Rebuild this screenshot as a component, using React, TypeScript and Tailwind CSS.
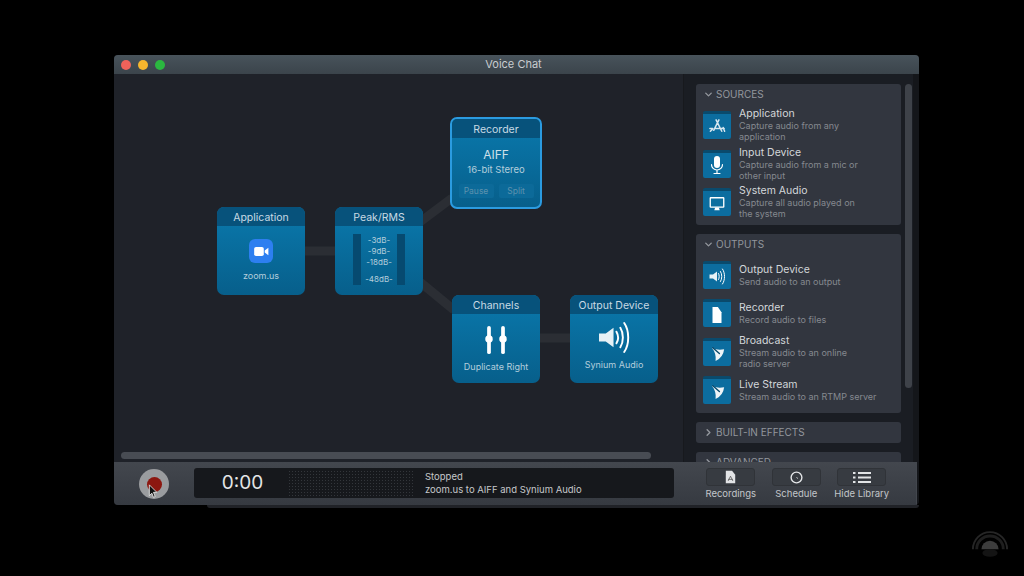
import React from 'react';
import { ChevronDown, ChevronRight } from 'lucide-react';

const font = { fontFamily: 'Inter, "Liberation Sans", sans-serif' };

function SpeakerIcon({ className }: { className: string }) {
	return (
		<svg viewBox="0 0 34 34" className={className} fill="none">
			<path d="M1 13h7l8-6v20l-8-6H1z" fill="#fff" opacity="0.9" />
			<path d="M19 11c2 3.500 2 8.500 0 12M23 7c3.500 5.500 3.500 14.500 0 20M27 2c5.500 8 5.500 22 0 30" stroke="#fff" strokeWidth="2" strokeLinecap="round" />
		</svg>
	);
}

function DishIcon() {
	return (
		<svg viewBox="0 0 20 20" className="w-[19px] h-[19px]" fill="none">
			<path d="M4 4Q10 7 17 5.500Q16 14 8 18Q9 10 4 4z" fill="#eef4f7" />
			<path d="M5 4l7 6" stroke="#0a4a6c" strokeWidth="1.500" strokeLinecap="round" />
		</svg>
	);
}

function AppStoreIcon() {
	return (
		<svg viewBox="0 0 20 20" className="w-[19px] h-[19px]" fill="none" stroke="#d6e6ef" strokeWidth="1.600" strokeLinecap="round">
			<path d="M11.500 3L6 14M8.500 3L14.500 15M2 12h3M8 12h9M2.500 15l2-2M16 11l1.500 4" />
		</svg>
	);
}

function MicIcon() {
	return (
		<svg viewBox="0 0 20 20" className="w-[20px] h-[20px]" fill="none">
			<rect x="7" y="1" width="6" height="12" rx="3" fill="#fff" />
			<path d="M4.500 9.500a5.500 5.500 0 0 0 11 0M10 15v3M7 18.500h6" stroke="#fff" strokeWidth="1.200" strokeLinecap="round" />
		</svg>
	);
}

function MonitorIcon() {
	return (
		<svg viewBox="0 0 20 20" className="w-[18px] h-[18px]" fill="none">
			<rect x="2.500" y="3" width="15" height="10.500" rx="0.500" stroke="#fff" strokeWidth="1.500" fill="#0d6f9f" />
			<path d="M8 14h4l1 3H7z" fill="#fff" />
		</svg>
	);
}

function FileIcon() {
	return (
		<svg viewBox="0 0 20 20" className="w-[18px] h-[18px]">
			<path d="M5 1h6l4 6v12H5z" fill="#fff" />
		</svg>
	);
}

function Node({ title, className, children }: { title: string; className: string; children: React.ReactNode }) {
	return (
		<div className={`absolute rounded-[7px] overflow-hidden flex flex-col bg-gradient-to-b from-[#0a79ad] to-[#075f8b] ${className}`}>
			<div className="h-[19px] shrink-0 bg-[#07527b] text-[#c8dae4] text-[10.500px] leading-[19px] pt-[0.500px] text-center">{title}</div>
			<div className="flex-1 flex flex-col items-center text-[#b4cedc]">{children}</div>
		</div>
	);
}

function LibraryItem({ icon, title, lines, className = '' }: { icon: React.ReactNode; title: string; lines: string[]; className?: string }) {
	return (
		<div className={`flex items-center ${className}`}>
			<div className="w-[28px] h-[28px] shrink-0 rounded-[2px] bg-[#0c6d9f] border-t-[3px] border-[#0a4a6c] flex items-center justify-center">{icon}</div>
			<div className="ml-[8px]">
				<div className="text-[10.500px] leading-[12px] text-[#d3d6da]">{title}</div>
				{lines.map((line) => (
					<div key={line} className="text-[9px] leading-[11px] text-[#85898f] whitespace-nowrap">
						{line}
					</div>
				))}
			</div>
		</div>
	);
}

function Panel({ title, open, className, children }: { title: string; open: boolean; className: string; children?: React.ReactNode }) {
	return (
		<div className={`shrink-0 rounded-[3px] bg-[#32363f] ${className}`}>
			<div className="h-[21px] flex items-center pl-[7px] gap-[2px] text-[#93979d] text-[10px]">
				{open ? <ChevronDown className="w-[11px] h-[11px]" strokeWidth={3} /> : <ChevronRight className="w-[11px] h-[11px]" strokeWidth={3} />}
				{title}
			</div>
			{children}
		</div>
	);
}

function ToolButton({ label, children }: { label: string; children: React.ReactNode }) {
	return (
		<div className="w-[65.500px] flex flex-col items-center">
			<div className="w-[49px] h-[18px] rounded-[3px] bg-[#373b41] border border-[#303338] flex items-center justify-center">{children}</div>
			<div className="mt-[1px] text-[9.500px] leading-[14px] text-[#c3c6ca] whitespace-nowrap">{label}</div>
		</div>
	);
}

export default function App() {
	return (
		<div className="relative w-[1024px] h-[576px] bg-black overflow-hidden pt-[55px] pl-[114px]" style={font}>
			<div className="w-[805px] h-[450px] flex flex-col rounded-[4px] overflow-hidden bg-[#14161a]">
				{/* Title bar */}
				<div className="relative h-[19px] shrink-0 bg-gradient-to-b from-[#48535b] to-[#3b444b] flex items-center pl-[7px] gap-[7px]">
					<div className="w-[10px] h-[10px] rounded-full bg-[#f0625a]" />
					<div className="w-[10px] h-[10px] rounded-full bg-[#f5b62e]" />
					<div className="w-[10px] h-[10px] rounded-full bg-[#2bb840]" />
					<div className="absolute inset-0 pr-[6px] text-center text-[11px] leading-[19px] text-[#c9ccd0]">Voice Chat</div>
				</div>

				<div className="flex h-[388px] shrink-0">
					{/* Canvas */}
					<div className="relative w-[569px] bg-[#1f2229]">
						<svg className="absolute inset-0 w-full h-full" fill="none" stroke="#2b2e34" strokeWidth="9">
							<path d="M191 177h30" />
							<path d="M306 148l32-24" />
							<path d="M306 208l34 28" />
							<path d="M426 264h30" />
						</svg>

						<Node title="Application" className="left-[103px] top-[133px] w-[88px] h-[88px]">
							<div className="mt-[13px] w-[24px] h-[24px] rounded-[6px] bg-[#2d7ff0] flex items-center justify-center">
								<svg viewBox="0 0 16 12" className="w-[15px] h-[11px]">
									<rect x="0" y="1" width="10.500" height="10" rx="2" fill="#fff" />
									<path d="M11.500 5l4-3v8l-4-3z" fill="#fff" />
								</svg>
							</div>
							<div className="mt-[7px] text-[9px] leading-[12px]">zoom.us</div>
						</Node>

						<Node title="Peak/RMS" className="left-[221px] top-[133px] w-[88px] h-[88px]">
							<div className="w-full flex justify-between px-[18px] pt-[8px]">
								<div className="w-[8px] h-[51px] bg-[#064a70]" />
								<div className="flex flex-col items-center text-[8px] leading-[11px] pt-[1px]">
									<span>-3dB-</span>
									<span>-9dB-</span>
									<span>-18dB-</span>
									<span className="mt-[6px]">-48dB-</span>
								</div>
								<div className="w-[8px] h-[51px] bg-[#064a70]" />
							</div>
						</Node>

						<Node title="Recorder" className="left-[336px] top-[43px] w-[92px] h-[92px] border-2 border-[#2b9be0]">
							<div className="mt-[9px] text-[12px] leading-[16px] text-[#cfe0e9]">AIFF</div>
							<div className="text-[9.500px] leading-[14px]">16-bit Stereo</div>
							<div className="mt-[7px] flex gap-[5px]">
								<div className="w-[35px] h-[14px] rounded-[2px] bg-[#0c6a99] text-[8.500px] leading-[14px] text-center text-[#5d92ae]">Pause</div>
								<div className="w-[35px] h-[14px] rounded-[2px] bg-[#0c6a99] text-[8.500px] leading-[14px] text-center text-[#5d92ae]">Split</div>
							</div>
						</Node>

						<Node title="Channels" className="left-[338px] top-[221px] w-[88px] h-[88px]">
							<svg viewBox="0 0 30 32" className="mt-[11px] w-[28px] h-[30px]">
								<rect x="5.500" y="1" width="4" height="30" rx="2" fill="#fff" />
								<rect x="20.500" y="1" width="4" height="30" rx="2" fill="#fff" />
								<circle cx="7.500" cy="15" r="4" fill="#fff" />
								<circle cx="22.500" cy="15" r="4" fill="#fff" />
							</svg>
							<div className="mt-[6px] text-[9px] leading-[12px]">Duplicate Right</div>
						</Node>

						<Node title="Output Device" className="left-[456px] top-[221px] w-[88px] h-[88px]">
							<SpeakerIcon className="mt-[7px] ml-[1px] w-[33px] h-[33px]" />
							<div className="mt-[5px] text-[9px] leading-[12px]">Synium Audio</div>
						</Node>

						{/* Horizontal scrollbar */}
						<div className="absolute left-[7px] top-[378px] w-[530px] h-[7px] rounded-full bg-[#484c53]" />
					</div>

					{/* Library */}
					<div className="relative w-[230px] bg-[#1a1d23] border-l border-[#17191d] pl-[12px] pt-[10px] flex flex-col gap-[9px] overflow-hidden">
						<Panel title="SOURCES" open className="w-[205px] h-[141px]">
							<div className="px-[7px] pt-[3px] flex flex-col gap-[4.500px]">
								<LibraryItem icon={<AppStoreIcon />} title="Application" lines={['Capture audio from any', 'application']} />
								<LibraryItem icon={<MicIcon />} title="Input Device" lines={['Capture audio from a mic or', 'other input']} />
								<LibraryItem icon={<MonitorIcon />} title="System Audio" lines={['Capture all audio played on', 'the system']} />
							</div>
						</Panel>
						<Panel title="OUTPUTS" open className="w-[205px] h-[179px]">
							<div className="px-[7px] pt-[6px] flex flex-col">
								<LibraryItem icon={<SpeakerIcon className="w-[17px] h-[17px]" />} title="Output Device" lines={['Send audio to an output']} />
								<LibraryItem className="mt-[10px]" icon={<FileIcon />} title="Recorder" lines={['Record audio to files']} />
								<LibraryItem className="mt-[8px]" icon={<DishIcon />} title="Broadcast" lines={['Stream audio to an online', 'radio server']} />
								<LibraryItem className="mt-[7px]" icon={<DishIcon />} title="Live Stream" lines={['Stream audio to an RTMP server']} />
							</div>
						</Panel>
						<Panel title="BUILT-IN EFFECTS" open={false} className="w-[205px] h-[21px]" />
						<Panel title="ADVANCED" open={false} className="w-[205px] h-[21px]" />
						<div className="absolute left-[221px] top-[10px] w-[7px] h-[304px] rounded-full bg-[#3e4249]" />
					</div>
				</div>

				{/* Bottom bar */}
				<div className="flex-1 flex items-start w-[803px] border-r border-[#43474e] bg-gradient-to-b from-[#43474e] to-[#363a41] pt-[6px]">
					<div className="relative ml-[25px] mt-[1px] w-[30px] h-[30px] rounded-full bg-[#9a9c9f] flex items-center justify-center">
						<div className="w-[15px] h-[15px] rounded-full bg-[#8c1710]" />
						<svg viewBox="0 0 12 18" className="absolute left-[9px] top-[15px] w-[11px] h-[15px]">
							<path d="M1 1v13l3-3 2 5 2-1-2-5h4z" fill="#111" stroke="#eee" strokeWidth="1" />
						</svg>
					</div>
					<div className="ml-[25px] w-[480px] h-[30px] rounded-[3px] bg-[#16181c] flex items-center">
						<div className="w-[94px] pl-[3px] text-center text-[19px] text-[#e4e5e6]">0:00</div>
						<div className="w-[125px] h-[26px] bg-[radial-gradient(#33363b_1px,transparent_1px)] bg-[length:3px_3px]" />
						<div className="ml-[12px] text-[9.500px] leading-[13px] text-[#c6c8cb]">
							<div>Stopped</div>
							<div>zoom.us to AIFF and Synium Audio</div>
						</div>
					</div>
					<div className="ml-[24px] flex">
						<ToolButton label="Recordings">
							<svg viewBox="0 0 14 16" className="w-[11px] h-[14px]">
								<path d="M1 0h8l4 5v11H1z" fill="#e2e4e6" />
								<path d="M7 7l-3 6M7 7l3 6M4 11h6" stroke="#555" strokeWidth="1" />
							</svg>
						</ToolButton>
						<ToolButton label="Schedule">
							<svg viewBox="0 0 14 14" className="w-[13px] h-[13px]" fill="none" stroke="#e2e4e6">
								<circle cx="7" cy="7" r="5.800" strokeWidth="1.500" />
								<path d="M7 7l1.500 1" strokeWidth="1" />
							</svg>
						</ToolButton>
						<ToolButton label="Hide Library">
							<svg viewBox="0 0 18 13" className="w-[18px] h-[13px]" fill="#e2e4e6">
								<rect x="0" y="1" width="2.500" height="2" />
								<rect x="5" y="1" width="13" height="2" />
								<rect x="0" y="5.500" width="2.500" height="2" />
								<rect x="5" y="5.500" width="13" height="2" />
								<rect x="0" y="10" width="2.500" height="2" />
								<rect x="5" y="10" width="13" height="2" />
							</svg>
						</ToolButton>
					</div>
				</div>
			</div>
			<div className="ml-[93px] w-[712px] h-[3px] rounded-b-[3px] bg-[#202227]" />

			{/* Watermark */}
			<svg viewBox="0 0 40 28" className="absolute left-[971px] top-[531px] w-[38px] h-[27px]" fill="none">
				<path d="M2 19a18 18 0 0 1 36 0" stroke="#262626" strokeWidth="2" />
				<path d="M6 19a14 14 0 0 1 28 0" stroke="#1f1f1f" strokeWidth="3" />
				<path d="M11 19a9 9 0 0 1 18 0z" fill="#3c3c3c" />
				<ellipse cx="20" cy="23" rx="8" ry="4" fill="#141414" />
			</svg>
		</div>
	);
}
